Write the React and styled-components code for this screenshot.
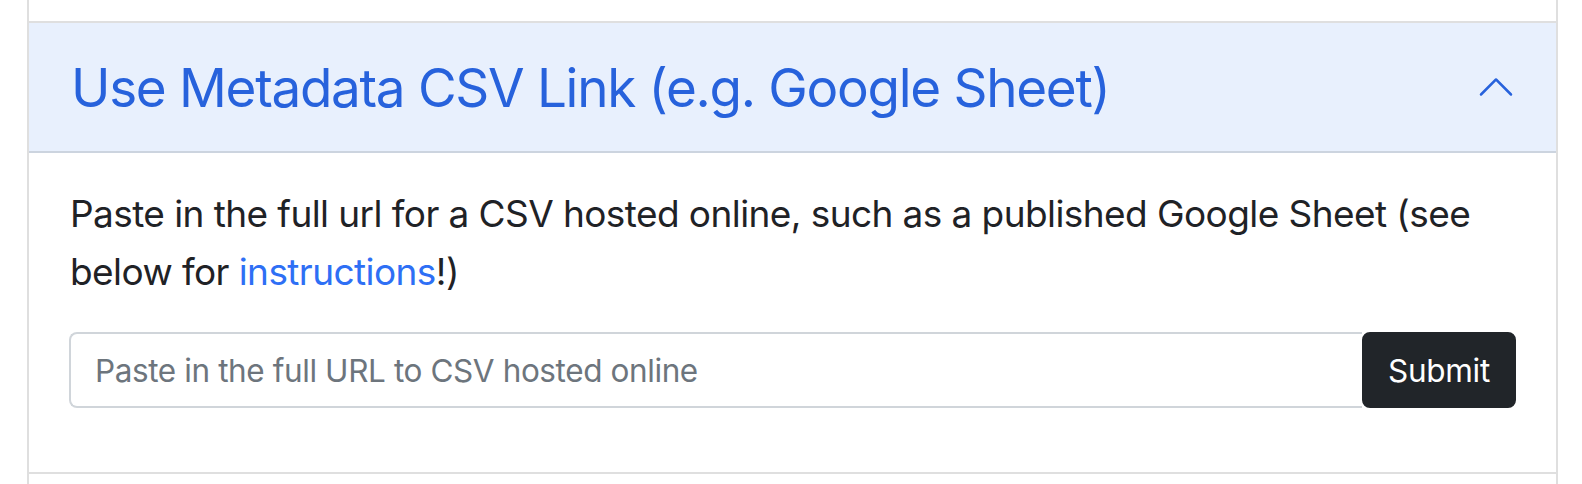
import React, { useState } from "react";
import styled, { createGlobalStyle } from "styled-components";

const GlobalStyle = createGlobalStyle`
	html, body {
		margin: 0;
		padding: 0;
		background: #ffffff;
		font-family: Inter, "Noto Sans", "Liberation Sans", sans-serif;
		color: #1f2226;
	}
`;

const Page = styled.div`
	padding: 0 24px 0 27px;
	height: 484px;
	overflow: hidden;
`;

const Accordion = styled.div`
	display: flex;
	flex-direction: column;
`;

const ItemStub = styled.div`
	flex-shrink: 0;
	height: ${(p) => p.height}px;
	border-left: 2px solid #dfdfdf;
	border-right: 2px solid #dfdfdf;
	border-bottom: ${(p) => (p.bottom ? "2px solid #dfdfdf" : "0")};
	background: #ffffff;
`;

const Item = styled.div`
	flex-shrink: 0;
	border: 2px solid #dfdfdf;
	border-top: 0;
	background: #ffffff;
`;

const HeaderButton = styled.button`
	display: flex;
	align-items: center;
	justify-content: space-between;
	width: 100%;
	padding: 33px 40px 31px 42px;
	border: 0;
	border-bottom: 2px solid #ccd4df;
	background: #e8f0fd;
	color: #2762dc;
	font-family: inherit;
	font-size: 53px;
	line-height: 64px;
	letter-spacing: -1.3px;
	text-align: left;
	cursor: pointer;
`;

const Chevron = styled.svg`
	width: 40px;
	height: 40px;
	flex-shrink: 0;
	margin-top: -2px;
	transform: rotate(${(p) => (p.open ? "-180deg" : "0deg")});
	fill: #2762dc;
`;

const Body = styled.div`
	padding: 32px 40px;
`;

const Lead = styled.p`
	margin: 0 0 32px 1px;
	font-size: 37px;
	line-height: 57.6px;
	letter-spacing: -0.58px;
	color: #1f2226;
`;

const Link = styled.a`
	color: #2e6ff5;
	text-decoration: none;
`;

const InputGroup = styled.form`
	display: flex;
	align-items: stretch;
	margin: 0 0 32px;
`;

const UrlInput = styled.input`
	flex: 1;
	min-width: 0;
	height: 76px;
	box-sizing: border-box;
	padding: 12px 24px;
	border: 2px solid #d0d5da;
	border-right: 0;
	border-radius: 8px 0 0 8px;
	font-family: inherit;
	font-size: 31.5px;
	letter-spacing: -0.4px;
	color: #1f2226;
	outline: none;

	&::placeholder {
		color: #6d757d;
	}
`;

const SubmitButton = styled.button`
	height: 76px;
	width: 154px;
	box-sizing: border-box;
	padding: 12px 24px;
	border: 2px solid #212529;
	border-radius: 8px;
	background: #212529;
	color: #ffffff;
	font-family: inherit;
	font-size: 31.5px;
	letter-spacing: -0.3px;
	cursor: pointer;
`;

const App = () => {
	const [open, setOpen] = useState(true);

	return (
		<>
			<GlobalStyle />
			<Page>
				<Accordion>
					<ItemStub height={21} bottom />
					<Item>
						<HeaderButton onClick={() => setOpen(!open)}>
							Use Metadata CSV Link (e.g. Google Sheet)
							<Chevron open={open} viewBox="0 0 16 16">
								<path d="M1.646 4.646a.5.5 0 0 1 .708 0L8 10.293l5.646-5.647a.5.5 0 0 1 .708.708l-6 6a.5.5 0 0 1-.708 0l-6-6a.5.5 0 0 1 0-.708z" />
							</Chevron>
						</HeaderButton>
						{open && (
							<Body>
								<Lead>
									Paste in the full url for a CSV hosted online, such as a
									published Google Sheet (see below for{" "}
									<Link href="#instructions">instructions</Link>!)
								</Lead>
								<InputGroup onSubmit={(e) => e.preventDefault()}>
									<UrlInput
										type="text"
										placeholder="Paste in the full URL to CSV hosted online"
									/>
									<SubmitButton type="submit">Submit</SubmitButton>
								</InputGroup>
							</Body>
						)}
					</Item>
					<ItemStub height={40} />
				</Accordion>
			</Page>
		</>
	);
};

export default App;
